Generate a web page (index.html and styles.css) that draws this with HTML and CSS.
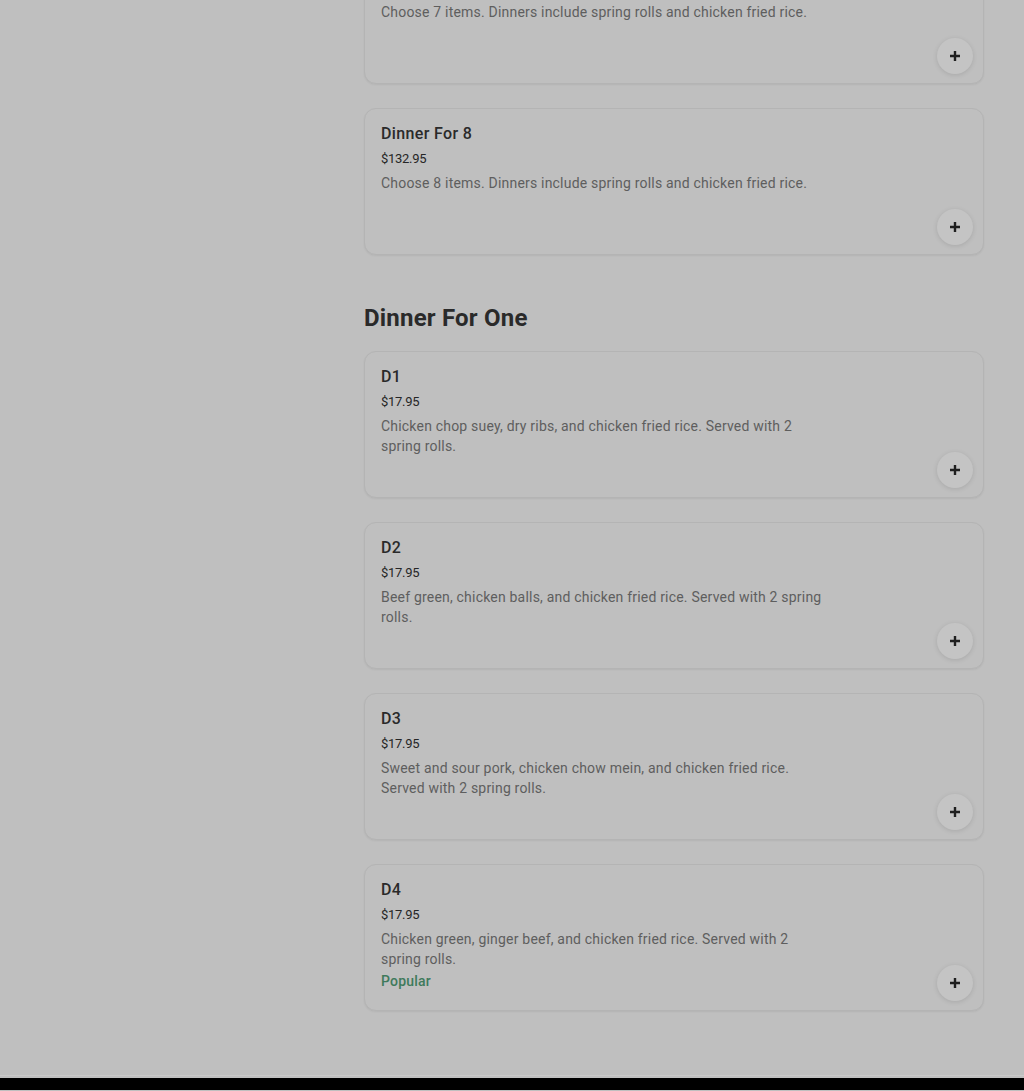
FILE: index.html
```html
<!DOCTYPE html>
<html lang="en">
<head>
<meta charset="utf-8">
<title>Menu</title>
<link rel="stylesheet" href="styles.css">
</head>
<body>
<div class="page">
  <aside class="sidebar"></aside>
  <main class="menu">
    <section class="section first">
      <div class="list">
        <div class="card">
          <div class="title">Dinner For 7</div>
          <div class="price">$116.95</div>
          <div class="desc">Choose 7 items. Dinners include spring rolls and chicken fried rice.</div>
          <button class="add" aria-label="Add"><svg viewBox="0 0 12 12" width="12" height="12"><path d="M6 1v10M1 6h10" stroke="#1f1f1f" stroke-width="2.4" fill="none"/></svg></button>
        </div>
        <div class="card">
          <div class="title">Dinner For 8</div>
          <div class="price">$132.95</div>
          <div class="desc">Choose 8 items. Dinners include spring rolls and chicken fried rice.</div>
          <button class="add" aria-label="Add"><svg viewBox="0 0 12 12" width="12" height="12"><path d="M6 1v10M1 6h10" stroke="#1f1f1f" stroke-width="2.4" fill="none"/></svg></button>
        </div>
      </div>
    </section>
    <section class="section">
      <h2 class="heading">Dinner For One</h2>
      <div class="list">
        <div class="card">
          <div class="title">D1</div>
          <div class="price">$17.95</div>
          <div class="desc">Chicken chop suey, dry ribs, and chicken fried rice. Served with 2 spring rolls.</div>
          <button class="add" aria-label="Add"><svg viewBox="0 0 12 12" width="12" height="12"><path d="M6 1v10M1 6h10" stroke="#1f1f1f" stroke-width="2.4" fill="none"/></svg></button>
        </div>
        <div class="card">
          <div class="title">D2</div>
          <div class="price">$17.95</div>
          <div class="desc">Beef green, chicken balls, and chicken fried rice. Served with 2 spring rolls.</div>
          <button class="add" aria-label="Add"><svg viewBox="0 0 12 12" width="12" height="12"><path d="M6 1v10M1 6h10" stroke="#1f1f1f" stroke-width="2.4" fill="none"/></svg></button>
        </div>
        <div class="card">
          <div class="title">D3</div>
          <div class="price">$17.95</div>
          <div class="desc">Sweet and sour pork, chicken chow mein, and chicken fried rice. Served with 2 spring rolls.</div>
          <button class="add" aria-label="Add"><svg viewBox="0 0 12 12" width="12" height="12"><path d="M6 1v10M1 6h10" stroke="#1f1f1f" stroke-width="2.4" fill="none"/></svg></button>
        </div>
        <div class="card">
          <div class="title">D4</div>
          <div class="price">$17.95</div>
          <div class="desc">Chicken green, ginger beef, and chicken fried rice. Served with 2 spring rolls.</div>
          <div class="tag">Popular</div>
          <button class="add" aria-label="Add"><svg viewBox="0 0 12 12" width="12" height="12"><path d="M6 1v10M1 6h10" stroke="#1f1f1f" stroke-width="2.4" fill="none"/></svg></button>
        </div>
      </div>
    </section>
  </main>
</div>
<footer class="footer"></footer>
</body>
</html>
```
FILE: styles.css
```css
* { box-sizing: border-box; }
html, body { margin: 0; padding: 0; }
body {
  background: #bfbfbf;
  font-family: Roboto, "Liberation Sans", Arial, sans-serif;
  color: #1f1f1f;
  height: 1091px;
  overflow: hidden;
  display: flex;
  flex-direction: column;
}
.page {
  display: flex;
  gap: 40px;
  padding: 0 40px 0 0;
  height: 1076px;
  flex: none;
  border-bottom: 1px solid #c9c9c9;
  margin-bottom: 2px;
}
.sidebar { width: 324px; flex: none; }
.menu { width: 620px; flex: none; }
.section.first { margin-top: -63px; }
.section + .section { margin-top: 47px; }
.heading {
  margin: 0 0 17px;
  font-size: 24px;
  line-height: 32px;
  font-weight: 700;
  letter-spacing: 0.2px;
  color: #2a2a2a;
}
.list { display: flex; flex-direction: column; gap: 24px; }
.card {
  position: relative;
  height: 147px;
  border: 1px solid #b4b4b4;
  border-radius: 12px;
  padding: 15px 16px 0 16px;
  background: #bfbfbf;
  box-shadow: 0 1px 2px rgba(0,0,0,0.06);
}
.title {
  font-size: 16px;
  line-height: 20px;
  font-weight: 500;
  letter-spacing: 0.35px;
  color: #2a2a2a;
}
.price {
  margin-top: 5px;
  font-size: 13px;
  line-height: 20px;
  color: #262626;
  letter-spacing: -0.3px;
}
.desc {
  margin-top: 4px;
  max-width: 445px;
  font-size: 14px;
  line-height: 20px;
  letter-spacing: 0.2px;
  color: #5e5e5e;
}
.tag {
  margin-top: 2px;
  font-size: 14px;
  line-height: 20px;
  font-weight: 500;
  letter-spacing: 0.2px;
  color: #3e7a5b;
}
.add {
  position: absolute;
  right: 10px;
  bottom: 9px;
  width: 36px;
  height: 36px;
  border: none;
  border-radius: 50%;
  background: #c4c4c4;
  box-shadow: 0 1px 5px rgba(0,0,0,0.12);
  display: flex;
  align-items: center;
  justify-content: center;
  padding: 0;
}
.footer {
  height: 12px;
  background: #000;
  flex: none;
}
```
